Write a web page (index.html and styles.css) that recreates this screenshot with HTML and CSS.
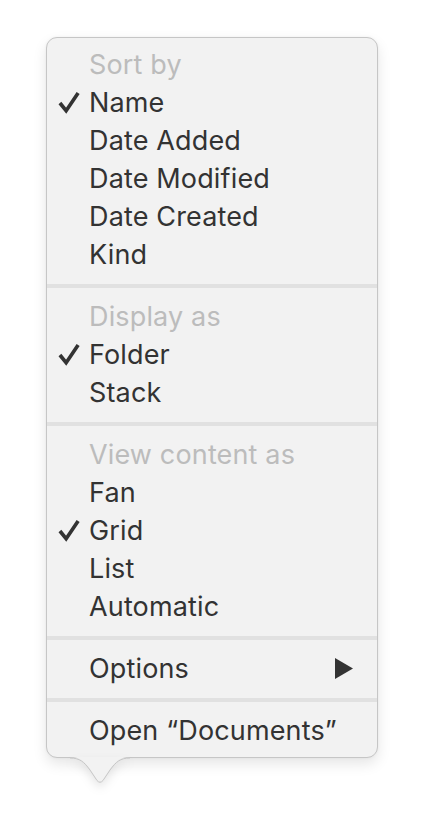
FILE: index.html
```html
<!DOCTYPE html>
<html>
<head>
<meta charset="utf-8">
<link rel="stylesheet" href="styles.css">
</head>
<body>
<div class="wrap">
  <div class="menu">
    <div class="row header">Sort by</div>
    <div class="row checked"><svg class="check" viewBox="0 0 24 24"><path d="M2 12.5 L8.5 20.5 L21 2"/></svg>Name</div>
    <div class="row">Date Added</div>
    <div class="row">Date Modified</div>
    <div class="row">Date Created</div>
    <div class="row">Kind</div>
    <div class="sep"></div>
    <div class="row header">Display as</div>
    <div class="row checked"><svg class="check" viewBox="0 0 24 24"><path d="M2 12.5 L8.5 20.5 L21 2"/></svg>Folder</div>
    <div class="row">Stack</div>
    <div class="sep"></div>
    <div class="row header">View content as</div>
    <div class="row">Fan</div>
    <div class="row checked"><svg class="check" viewBox="0 0 24 24"><path d="M2 12.5 L8.5 20.5 L21 2"/></svg>Grid</div>
    <div class="row">List</div>
    <div class="row">Automatic</div>
    <div class="sep"></div>
    <div class="row sub">Options<svg class="arrow" viewBox="0 0 18 21"><path d="M0 0 L18 10.5 L0 21 Z"/></svg></div>
    <div class="sep"></div>
    <div class="row">Open “Documents”</div>
  </div>
  <svg class="tail" viewBox="0 0 60 30"><path class="tail-fill" d="M0 0 C10 0 14 4 20 12 L27 22.5 Q30 26 33 22.5 L40 12 C46 4 50 0 60 0 Z"/><path class="tail-line" d="M0 1 C10 1 14 5 20 13 L27 23.5 Q30 27 33 23.5 L40 13 C46 5 50 1 60 1"/></svg>
</div>
</body>
</html>
```
FILE: styles.css
```css
html, body {
  margin: 0;
  padding: 0;
  background: #ffffff;
}
body {
  padding: 37px 0 0 46px;
  font-family: "Inter", "Liberation Sans", sans-serif;
}
.wrap {
  position: relative;
  width: 332px;
  padding-bottom: 40px;
}
.menu {
  box-sizing: border-box;
  width: 332px;
  background: #f2f2f2;
  border: 1px solid #c6c6c6;
  border-radius: 11px;
  padding: 7px 0 8px;
  box-shadow: 0 6px 14px rgba(0,0,0,0.10), 0 0 3px rgba(0,0,0,0.05);
}
.row {
  position: relative;
  box-sizing: border-box;
  height: 38px;
  line-height: 38px;
  padding-top: 1px;
  padding-left: 42px;
  font-size: 27px;
  color: #333333;
  letter-spacing: 0.15px;
  white-space: nowrap;
}
.header {
  color: #bcbcbc;
}
.check {
  position: absolute;
  left: 11px;
  top: 8px;
  width: 23px;
  height: 23px;
  fill: none;
  stroke: #333333;
  stroke-width: 3.8;
  stroke-linecap: butt;
  stroke-linejoin: miter;
}
.arrow {
  position: absolute;
  right: 24px;
  top: 9px;
  width: 18px;
  height: 21px;
  fill: #333333;
}
.sep {
  height: 4px;
  background: #e1e1e1;
  margin: 11px 0 9px;
}
.tail {
  position: absolute;
  left: 24px;
  top: 720px;
  width: 60px;
  height: 30px;
  overflow: visible;
  filter: drop-shadow(0 5px 5px rgba(0,0,0,0.10));
}
.tail-fill {
  fill: #f2f2f2;
}
.tail-line {
  fill: none;
  stroke: #c6c6c6;
  stroke-width: 1;
}
```
